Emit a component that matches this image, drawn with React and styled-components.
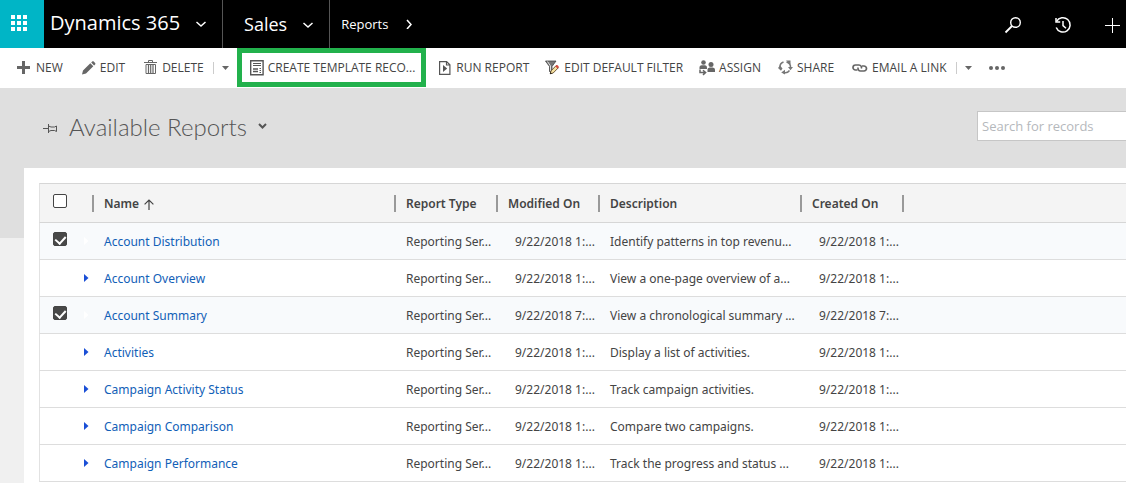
import React from "react";
import styled, { createGlobalStyle } from "styled-components";

const GlobalStyle = createGlobalStyle`
  * { box-sizing: border-box; }
  body {
    margin: 0;
    background: #f0f0f0;
    color: #444;
    font-family: "Open Sans", "Noto Sans", sans-serif;
    font-size: 12px;
    line-height: 16px;
  }
  button, input { font: inherit; color: inherit; }
  button { border: 0; background: none; padding: 0; cursor: pointer; white-space: nowrap; }
  a { text-decoration: none; }
`;

const Page = styled.div`
  display: flex;
  flex-direction: column;
  min-height: 100vh;
`;

const TopBar = styled.header`
  display: flex;
  align-items: stretch;
  height: 48px;
  background: #000;
  color: #fff;
`;

const Launcher = styled.button`
  display: flex;
  align-items: center;
  justify-content: center;
  width: 44px;
  padding: 0 6px 2px 0;
  background: #00b5c6;
`;

const NavButton = styled.button`
  display: flex;
  align-items: center;
  gap: 16px;
  padding: 0 16px ${(p) => p.$lift || 0}px ${(p) => p.$start}px;
  border-left: ${(p) => (p.$divided ? "1px solid #555" : "0")};
  font-size: ${(p) => p.$size}px;
  line-height: 24px;
`;

const TopActions = styled.div`
  display: flex;
  align-items: center;
  gap: 32px;
  margin-left: auto;
  padding: 2px 6px 0 0;
`;

const IconButton = styled.button`
  display: flex;
  align-items: center;
  justify-content: center;
`;

const CommandBar = styled.nav`
  display: flex;
  align-items: center;
  height: 40px;
  padding: 0 8px 1px;
  background: #fff;
`;

const Command = styled.button`
  display: flex;
  align-items: center;
  gap: 4px;
  height: 39px;
  padding: 0 ${(p) => (p.$tight ? 8 : 9)}px;
`;

const HighlightedCommand = styled(Command)`
  border: 5px solid #22b14c;
  padding: 0 6px 0 8px;
  margin-right: 5px;
`;

const MoreButton = styled.button`
  display: flex;
  align-items: center;
  height: 12px;
  padding: 0 8px;
  border-left: 1px solid #ccc;
`;

const Main = styled.main`
  flex: 1;
  display: flex;
  flex-direction: column;
  background: linear-gradient(#dfdfdf 150px, #f0f0f0 150px);
`;

const ViewHeader = styled.div`
  display: flex;
  align-items: center;
  justify-content: space-between;
  height: 80px;
  padding-left: 43px;
`;

const ViewPicker = styled.div`
  display: flex;
  align-items: center;
  gap: 11px;
`;

const ViewTitle = styled.h1`
  margin: 0;
  padding-bottom: 2px;
  color: #555;
  font-family: Lato, "Open Sans", sans-serif;
  font-size: 24px;
  line-height: 32px;
  font-weight: 300;
`;

const SearchBox = styled.input`
  width: 149px;
  height: 30px;
  margin-bottom: 4px;
  padding: 0 4px;
  border: 1px solid #c6c6c6;
  border-right: 0;
  border-radius: 0;
  background: #fff;
  outline: none;
  font-size: 13px;
  &::placeholder { color: #b5b8bc; opacity: 1; }
`;

const Card = styled.section`
  flex: 1;
  margin-left: 24px;
  padding: 15px 0 0 15px;
  background: #fff;
`;

const Grid = styled.table`
  width: 100%;
  table-layout: fixed;
  border-collapse: separate;
  border-spacing: 0;
  text-align: left;
  font-family: "Noto Sans", "Open Sans", sans-serif;
`;

const HeadCell = styled.th`
  height: 40px;
  padding: 0;
  background: #f4f4f4;
  border-top: 1px solid #d6d6d6;
  border-bottom: 1px solid #d6d6d6;
  font-weight: 600;
  white-space: nowrap;
  &:first-child { border-left: 1px solid #e2e2e2; }
`;

const HeadLabel = styled.div`
  display: flex;
  align-items: center;
  gap: 5px;
  height: 17px;
  padding: 2px 0 0 10px;
  border-left: 2px solid #999;
`;

const Row = styled.tr`
  background: ${(p) => (p.$selected ? "#f8fafc" : "#fff")};
`;

const Cell = styled.td`
  height: 37px;
  padding: 2px 0 0 ${(p) => p.$indent ?? 12}px;
  border-bottom: 1px solid #ddd;
  white-space: nowrap;
  overflow: hidden;
`;

const ControlCell = styled(Cell)`
  padding: 0;
  border-left: 1px solid #e2e2e2;
`;

const RowControls = styled.div`
  display: flex;
  align-items: center;
  gap: 17px;
  padding-left: 13px;
`;

const Check = styled.input`
  appearance: none;
  display: flex;
  flex: none;
  justify-content: center;
  width: 14px;
  height: 14px;
  margin: 0 0 4px;
  border: 1px solid #444;
  border-radius: 2px;
  background: #fff;
  &:checked { background: #484848; }
  &:checked::after {
    content: "";
    width: 5px;
    height: 8px;
    margin-top: 1px;
    border: solid #fff;
    border-width: 0 2px 2px 0;
    transform: rotate(42deg);
  }
`;

const HiddenCheckSpace = styled(Check)`
  opacity: 0;
`;

const ReportLink = styled.a`
  color: #1160b7;
`;

const Waffle = () => (
  <svg width="16" height="16" viewBox="0 0 16 16" fill="#fff" aria-hidden="true">
    {[0, 6, 12].map((y) => [0, 6, 12].map((x) => (
      <rect key={`${x}-${y}`} x={x} y={y} width="4" height="4" />
    )))}
  </svg>
);

const Chevron = ({ turned }) => (
  <svg width="10" height="10" viewBox="0 0 10 10" fill="none" stroke="#fff" strokeWidth="1.5" aria-hidden="true">
    <path d={turned ? "M3 1l4 4.5L3 10" : "M.5 4l4.5 4 4.5-4"} />
  </svg>
);

const SearchIcon = () => (
  <svg width="18" height="18" viewBox="0 0 18 18" fill="none" stroke="#fff" strokeWidth="1.4" aria-hidden="true">
    <circle cx="11.5" cy="6.5" r="4.8" />
    <path d="M8 10L1.5 16.5" strokeWidth="1.8" />
  </svg>
);

const HistoryIcon = () => (
  <svg width="18" height="18" viewBox="0 0 18 18" fill="none" stroke="#fff" strokeWidth="1.5" aria-hidden="true">
    <path d="M2.6 5.4A7.2 7.2 0 1 1 2.2 11.5" />
    <path d="M2 2v4h4.2M9 5v4.6l3 2.6" />
  </svg>
);

const PlusThin = () => (
  <svg width="16" height="16" viewBox="0 0 16 16" stroke="#fff" aria-hidden="true">
    <path d="M8.5 1v15M1 8.5h15" />
  </svg>
);

const CmdPlus = () => (
  <svg width="15" height="14" viewBox="0 0 15 14" fill="#666" aria-hidden="true">
    <path d="M5 0h3v5h5v3H8v5H5V8H0V5h5z" />
  </svg>
);

const Pencil = () => (
  <svg width="15" height="14" viewBox="0 0 15 14" fill="#666" aria-hidden="true">
    <path d="M1 13.500l1-4L9.300 2.200l3 3L5 12.500zM10.200 1.500l1-.9c.5-.5 1-.5 1.500 0l1.400 1.400c.5.5.5 1 0 1.500l-1 .9z" />
  </svg>
);

const Trash = () => (
  <svg width="15" height="15" viewBox="0 0 15 15" fill="none" stroke="#666" aria-hidden="true">
    <path d="M5.500 2V.5h4V2M1 2.500h13M3 4.500h9.500v9H3z" />
    <path d="M5.500 5v8M7.700 5v8M10 5v8" strokeWidth="1.200" />
  </svg>
);

const TemplateIcon = () => (
  <svg width="14" height="16" viewBox="0 0 14 16" fill="none" stroke="#555" aria-hidden="true">
    <path d="M.7.7h12.400v14.100H.7z" strokeWidth="1.400" />
    <path d="M3 3.500h8M3 5.500h8" />
    <path d="M3 9h5M3 11.500h5" strokeWidth="1.600" />
    <path d="M9.500 8.500H11M9.500 10.500H11M9.500 12.500H11" />
  </svg>
);

const RunIcon = () => (
  <svg width="13" height="14" viewBox="0 0 13 14" fill="none" stroke="#555" aria-hidden="true">
    <path d="M.6.6h7l3.300 3.200v9.600H.6zM7.500.6V4H11" strokeWidth="1.200" />
    <path d="M4 4l4.200 3.500L4 11z" fill="#555" stroke="none" />
  </svg>
);

const FilterIcon = () => (
  <svg width="15" height="15" viewBox="0 0 15 15" aria-hidden="true">
    <path d="M.5 1h10.500L7 6.500v7L4.500 11.500v-5z" fill="#777" stroke="#444" strokeWidth=".8" />
    <path d="M2.500 1.500L5.500 6v5" fill="none" stroke="#ddd" />
    <path d="M5.200 13.800l.9-3L11.200 5.500l2.200 2.200L8.200 13z" fill="#f7e2a0" stroke="#4a3218" strokeWidth=".8" />
    <path d="M10.300 6.500l1-1.200c.8-1 3.200 1.200 2.300 2.200l-1 1.100z" fill="#d64b3c" />
    <path d="M5 14l.5-1.700L6.800 13.500z" fill="#111" />
  </svg>
);

const AssignIcon = () => (
  <svg width="16" height="16" viewBox="0 0 16 16" fill="#666" aria-hidden="true">
    <circle cx="4.500" cy="2.500" r="2.300" />
    <path d="M.5 9V7.500C.5 5.500 2 5.300 4.500 5.300S8 5.800 8 7.500V9z" />
    <circle cx="12" cy="4.500" r="2.500" />
    <path d="M8.500 12v-2.200C8.500 7.800 10 7.500 12.200 7.500S16 7.800 16 9.800V12z" />
    <path d="M1 9.500v3h5M4 10.200l2.600 2.300L4 14.900" fill="none" stroke="#666" strokeWidth="1.500" />
  </svg>
);

const ShareIcon = () => (
  <svg width="15" height="15" viewBox="0 0 15 15" fill="none" stroke="#777" aria-hidden="true">
    <path d="M2 7.500A5.300 5.300 0 0 1 5.500 2M8.500 2a5.300 5.300 0 0 1 4 5.500M11.500 10.500a5.500 5.500 0 0 1-6 2" strokeWidth="1.500" />
    <path d="M8 .5h4.500v4zM10 7h5l-2.500 3.300zM7 9.700v4.800L3.200 12.500z" fill="#777" stroke="none" />
    <path d="M0 8l2-2.500L4.500 8.500 3 10.800z" fill="#777" stroke="none" />
  </svg>
);

const LinkIcon = () => (
  <svg width="16" height="8" viewBox="0 0 16 8" fill="none" stroke="#666" strokeWidth="1.700" aria-hidden="true">
    <path d="M5.500 6H3.500a2.500 2.500 0 0 1 0-5H7a2.500 2.500 0 0 1 2.300 3.500" />
    <path d="M10 2h2a2.500 2.500 0 0 1 0 5H8.500a2.500 2.500 0 0 1-2.300-3.500" />
  </svg>
);

const Caret = () => (
  <svg width="7" height="4" viewBox="0 0 7 4" fill="#666" aria-hidden="true">
    <path d="M0 0h7L3.500 4z" />
  </svg>
);

const Dots = () => (
  <svg width="16" height="4" viewBox="0 0 16 4" fill="#666" aria-hidden="true">
    <circle cx="2" cy="2" r="2" />
    <circle cx="8" cy="2" r="2" />
    <circle cx="14" cy="2" r="2" />
  </svg>
);

const Pin = () => (
  <svg width="15" height="10" viewBox="0 0 15 10" fill="none" stroke="#555" aria-hidden="true">
    <path d="M0 5.500h5M5.500 1v9M5.500 3l2.500 1h3.500l2-1v5.500l-2-1H8l-2.500 1" />
  </svg>
);

const ViewChevron = () => (
  <svg width="9" height="11" viewBox="0 0 9 11" fill="none" stroke="#555" strokeWidth="2" aria-hidden="true">
    <path d="M1 1l3.500 3.500L8 1" />
  </svg>
);

const SortArrow = () => (
  <svg width="10" height="11" viewBox="0 0 10 11" fill="none" stroke="#444" strokeWidth="1.200" aria-hidden="true">
    <path d="M5 11V1M.600 5.400L5 1l4.400 4.400" />
  </svg>
);

const Expander = ({ muted }) => (
  <svg width="5" height="8" viewBox="0 0 5 8" fill={muted ? "#fff" : "#1a4fd6"} aria-hidden="true">
    <path d="M0 0l4.500 4L0 8z" />
  </svg>
);

const reports = [
  { name: "Account Distribution", time: "1", about: "Identify patterns in top revenu...", selected: true },
  { name: "Account Overview", time: "1", about: "View a one-page overview of a..." },
  { name: "Account Summary", time: "7", about: "View a chronological summary ...", selected: true },
  { name: "Activities", time: "1", about: "Display a list of activities." },
  { name: "Campaign Activity Status", time: "1", about: "Track campaign activities." },
  { name: "Campaign Comparison", time: "1", about: "Compare two campaigns." },
  { name: "Campaign Performance", time: "1", about: "Track the progress and status ..." },
];

export default function App() {
  return (
    <Page>
      <GlobalStyle />
      <TopBar>
        <Launcher aria-label="App launcher"><Waffle /></Launcher>
        <NavButton $size={20} $start={6} $lift={3}>Dynamics 365 <Chevron /></NavButton>
        <NavButton $divided $size={18} $start={21}>Sales <Chevron /></NavButton>
        <NavButton $divided $size={13} $start={11}>Reports <Chevron turned /></NavButton>
        <TopActions>
          <IconButton aria-label="Search"><SearchIcon /></IconButton>
          <IconButton aria-label="Recently viewed"><HistoryIcon /></IconButton>
          <IconButton aria-label="Create"><PlusThin /></IconButton>
        </TopActions>
      </TopBar>
      <CommandBar>
        <Command><CmdPlus />NEW</Command>
        <Command><Pencil />EDIT</Command>
        <Command><Trash />DELETE</Command>
        <MoreButton aria-label="More delete options"><Caret /></MoreButton>
        <HighlightedCommand><TemplateIcon />CREATE TEMPLATE RECO...</HighlightedCommand>
        <Command $tight><RunIcon />RUN REPORT</Command>
        <Command $tight><FilterIcon />EDIT DEFAULT FILTER</Command>
        <Command $tight><AssignIcon />ASSIGN</Command>
        <Command><ShareIcon />SHARE</Command>
        <Command><LinkIcon />EMAIL A LINK</Command>
        <MoreButton aria-label="More link options"><Caret /></MoreButton>
        <Command aria-label="More commands"><Dots /></Command>
      </CommandBar>
      <Main>
        <ViewHeader>
          <ViewPicker>
            <Pin />
            <ViewTitle>Available Reports</ViewTitle>
            <IconButton aria-label="Change view"><ViewChevron /></IconButton>
          </ViewPicker>
          <SearchBox type="text" aria-label="Search for records" placeholder="Search for records" />
        </ViewHeader>
        <Card>
          <Grid>
            <colgroup>
              <col width="53" />
              <col width="302" />
              <col width="102" />
              <col width="102" />
              <col width="202" />
              <col width="102" />
              <col />
            </colgroup>
            <thead>
              <tr>
                <HeadCell>
                  <RowControls><Check type="checkbox" aria-label="Select all reports" /></RowControls>
                </HeadCell>
                <HeadCell><HeadLabel>Name <SortArrow /></HeadLabel></HeadCell>
                <HeadCell><HeadLabel>Report Type</HeadLabel></HeadCell>
                <HeadCell><HeadLabel>Modified On</HeadLabel></HeadCell>
                <HeadCell><HeadLabel>Description</HeadLabel></HeadCell>
                <HeadCell><HeadLabel>Created On</HeadLabel></HeadCell>
                <HeadCell><HeadLabel /></HeadCell>
              </tr>
            </thead>
            <tbody>
              {reports.map((r) => {
                const Tick = r.selected ? Check : HiddenCheckSpace;
                return (
                  <Row key={r.name} $selected={r.selected}>
                    <ControlCell>
                      <RowControls>
                        <Tick type="checkbox" defaultChecked={r.selected} aria-label={`Select ${r.name}`} />
                        <Expander muted={r.selected} />
                      </RowControls>
                    </ControlCell>
                    <Cell><ReportLink href="#">{r.name}</ReportLink></Cell>
                    <Cell>Reporting Ser...</Cell>
                    <Cell $indent={19}>9/22/2018 {r.time}:...</Cell>
                    <Cell>{r.about}</Cell>
                    <Cell $indent={19}>9/22/2018 {r.time}:...</Cell>
                    <Cell />
                  </Row>
                );
              })}
            </tbody>
          </Grid>
        </Card>
      </Main>
    </Page>
  );
}
